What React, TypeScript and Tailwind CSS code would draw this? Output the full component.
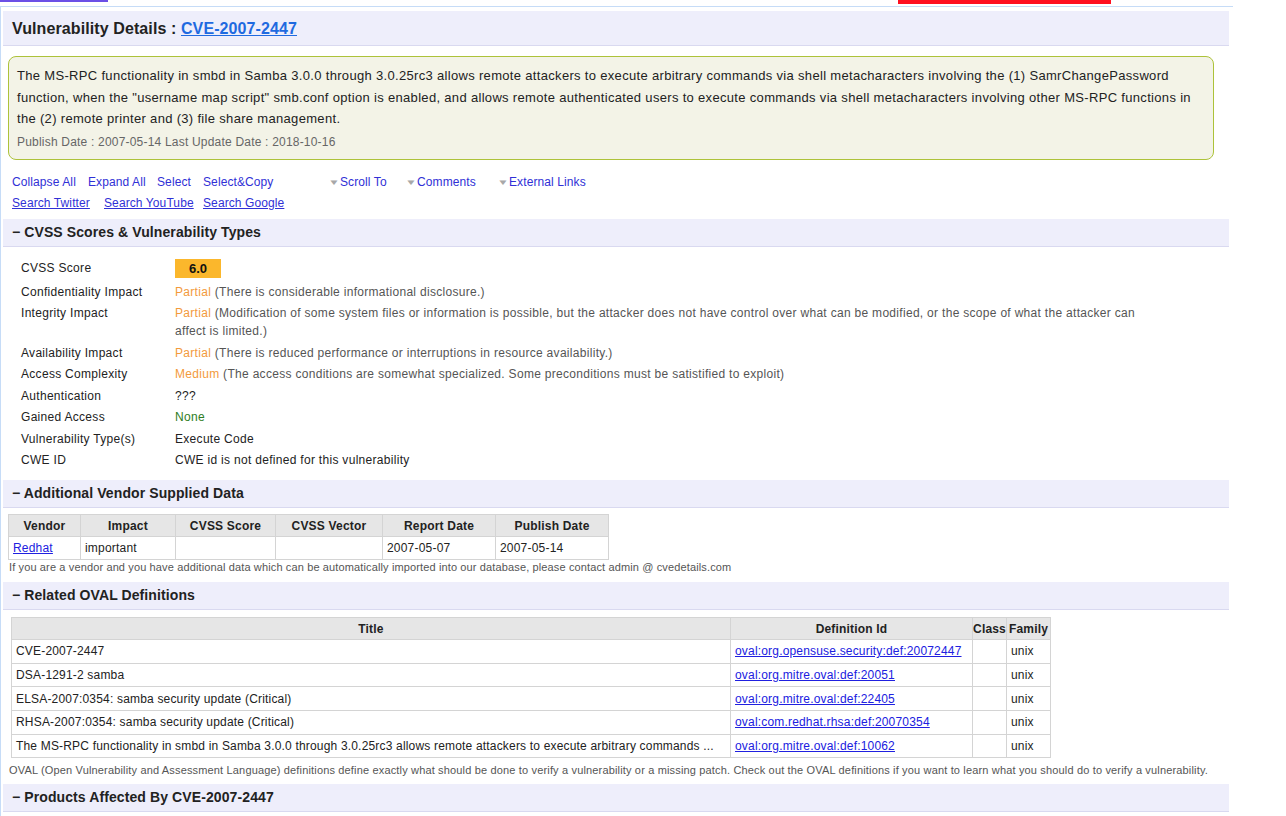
import React from "react";

const F = "font-['Liberation_Sans',Arial,sans-serif]";

function SectionHeader({ title }: { title: string }) {
  return (
    <div className="h-[28px] bg-[#eeeefb] border-b border-[#d9d9f0] flex items-center pl-[9px]">
      <span className="text-[14px] font-bold text-[#222] tracking-[0.1px]">− {title}</span>
    </div>
  );
}

const O = "text-[#f39a3c]";

const cvssRows: { label: string; value: React.ReactNode }[] = [
  {
    label: "Confidentiality Impact",
    value: (
      <>
        <span className={O}>Partial</span> (There is considerable informational disclosure.)
      </>
    ),
  },
  {
    label: "Integrity Impact",
    value: (
      <>
        <span className="block whitespace-nowrap">
          <span className={O}>Partial</span> (Modification of some system files or information is possible, but the attacker does not have control over what can be modified, or the scope of what the attacker can
        </span>
        <span className="block">affect is limited.)</span>
      </>
    ),
  },
  {
    label: "Availability Impact",
    value: (
      <>
        <span className={O}>Partial</span> (There is reduced performance or interruptions in resource availability.)
      </>
    ),
  },
  {
    label: "Access Complexity",
    value: (
      <>
        <span className={O}>Medium</span> (The access conditions are somewhat specialized. Some preconditions must be satistified to exploit)
      </>
    ),
  },
  { label: "Authentication", value: <span className="text-[#222]">???</span> },
  { label: "Gained Access", value: <span className="text-[#2e7d1e]">None</span> },
  { label: "Vulnerability Type(s)", value: <span className="text-[#222]">Execute Code</span> },
  { label: "CWE ID", value: <span className="text-[#222]">CWE id is not defined for this vulnerability</span> },
];

const ovalRows = [
  ["CVE-2007-2447", "oval:org.opensuse.security:def:20072447"],
  ["DSA-1291-2 samba", "oval:org.mitre.oval:def:20051"],
  ["ELSA-2007:0354: samba security update (Critical)", "oval:org.mitre.oval:def:22405"],
  ["RHSA-2007:0354: samba security update (Critical)", "oval:com.redhat.rhsa:def:20070354"],
  [
    "The MS-RPC functionality in smbd in Samba 3.0.0 through 3.0.25rc3 allows remote attackers to execute arbitrary commands ...",
    "oval:org.mitre.oval:def:10062",
  ],
];

const B = "border border-[#d4d4d4]";

export default function App() {
  return (
    <div className={`${F} bg-white w-[1286px] h-[816px] overflow-hidden text-[#333]`}>
      {/* top strip */}
      <div className="h-[6px] flex">
        <div className="w-[108px] h-[2px] bg-[#6b4fe6]" />
        <div className="ml-[790px] w-[213px] h-[4px] bg-[#ff1020]" />
      </div>
      <div className="w-[1233px] border-t border-l border-[#c6dcf7] pl-[2px] pr-[4px] pt-[4px] min-h-[810px]">
        {/* title bar */}
        <div className="h-[35px] bg-[#eeeefb] border-b border-[#d9d9f0] flex items-center pl-[9px] pt-[1px]">
          <h1 className="text-[16px] font-bold text-[#222] tracking-[0.1px]">
            Vulnerability Details :{" "}
            <a href="#" className="text-[#1f6ae0] underline">
              CVE-2007-2447
            </a>
          </h1>
        </div>

        {/* description */}
        <div className="mt-[10px] ml-[5px] w-[1206px] h-[104px] rounded-[8px] border border-[#adc23a] bg-[#f3f3e7] pl-[8px] pt-[8px]">
          <div className="text-[13px] leading-[21.5px] text-[#222] tracking-[0.32px]">
            <div className="whitespace-nowrap">
              The MS-RPC functionality in smbd in Samba 3.0.0 through 3.0.25rc3 allows remote attackers to execute arbitrary commands via shell metacharacters involving the (1) SamrChangePassword
            </div>
            <div className="whitespace-nowrap">
              function, when the "username map script" smb.conf option is enabled, and allows remote authenticated users to execute commands via shell metacharacters involving other MS-RPC functions in
            </div>
            <div className="whitespace-nowrap">the (2) remote printer and (3) file share management.</div>
          </div>
          <div className="text-[12px] text-[#666] leading-[15px] mt-[5px] tracking-[0.2px]">
            Publish Date : 2007-05-14 Last Update Date : 2018-10-16
          </div>
        </div>

        {/* links */}
        <div className="mt-[12px] pl-[9px] text-[12px] leading-[21px] text-[#3030d6] tracking-[0.1px]">
          <div className="flex">
            <span className="w-[76px]">Collapse All</span>
            <span className="w-[69px]">Expand All</span>
            <span className="w-[46px]">Select</span>
            <span className="w-[125px]">Select&amp;Copy</span>
            <span className="w-[77px] flex items-center">
              <span className="text-[#a8a8a8] text-[8px] w-[12px] scale-x-150 origin-left">▼</span>Scroll To
            </span>
            <span className="w-[92px] flex items-center">
              <span className="text-[#a8a8a8] text-[8px] w-[12px] scale-x-150 origin-left">▼</span>Comments
            </span>
            <span className="flex items-center">
              <span className="text-[#a8a8a8] text-[8px] w-[12px] scale-x-150 origin-left">▼</span>External Links
            </span>
          </div>
          <div className="flex">
            <a href="#" className="w-[92px] underline">Search Twitter</a>
            <a href="#" className="w-[99px] underline">Search YouTube</a>
            <a href="#" className="underline">Search Google</a>
          </div>
        </div>

        {/* CVSS */}
        <div className="mt-[5px]">
          <SectionHeader title="CVSS Scores & Vulnerability Types" />
        </div>
        <div className="mt-[12px] pl-[18px] text-[12px] leading-[18px] tracking-[0.3px]">
          <div className="flex h-[22px] items-start">
            <div className="w-[154px] text-[#222] leading-[18px]">CVSS Score</div>
            <div className="w-[46px] h-[19px] bg-[#fbb72c] flex items-center justify-center font-bold text-[13px] text-[#111] tracking-normal">
              6.0
            </div>
          </div>
          {cvssRows.map((r) => (
            <div key={r.label} className="flex py-[1.75px]">
              <div className="w-[154px] shrink-0 text-[#222]">{r.label}</div>
              <div className="text-[#555]">{r.value}</div>
            </div>
          ))}
        </div>

        {/* Vendor */}
        <div className="mt-[9px]">
          <SectionHeader title="Additional Vendor Supplied Data" />
        </div>
        <table className="mt-[6px] ml-[5px] border-collapse table-fixed w-[600px] text-[12px] text-[#222] tracking-[0.2px]">
          <thead>
            <tr className="bg-[#e6e6e6] h-[22px]">
              {[
                ["Vendor", "w-[72px]"],
                ["Impact", "w-[95px]"],
                ["CVSS Score", "w-[100px]"],
                ["CVSS Vector", "w-[107px]"],
                ["Report Date", "w-[113px]"],
                ["Publish Date", "w-[113px]"],
              ].map(([h, w]) => (
                <th key={h} className={`${w} ${B} font-bold text-center`}>
                  {h}
                </th>
              ))}
            </tr>
          </thead>
          <tbody>
            <tr className="h-[23px]">
              <td className={`${B} px-[4px]`}>
                <a href="#" className="text-[#2020e0] underline">Redhat</a>
              </td>
              <td className={`${B} px-[4px]`}>important</td>
              <td className={`${B} px-[4px]`}></td>
              <td className={`${B} px-[4px]`}></td>
              <td className={`${B} px-[4px]`}>2007-05-07</td>
              <td className={`${B} px-[4px]`}>2007-05-14</td>
            </tr>
          </tbody>
        </table>
        <div className="pl-[6px] text-[11px] leading-[18px] text-[#555] -mt-[2px] tracking-[0.13px]">
          If you are a vendor and you have additional data which can be automatically imported into our database, please contact admin @ cvedetails.com
        </div>

        {/* OVAL */}
        <div className="mt-[6px]">
          <SectionHeader title="Related OVAL Definitions" />
        </div>
        <table className="mt-[7px] ml-[8px] border-collapse table-fixed w-[1039px] text-[12px] text-[#222] tracking-[0.18px]">
          <thead>
            <tr className="bg-[#e6e6e6] h-[22px]">
              <th className={`w-[719px] ${B} font-bold text-center`}>Title</th>
              <th className={`w-[242px] ${B} font-bold text-center`}>Definition Id</th>
              <th className={`w-[34px] ${B} font-bold text-center`}>Class</th>
              <th className={`w-[44px] ${B} font-bold text-center`}>Family</th>
            </tr>
          </thead>
          <tbody>
            {ovalRows.map(([t, d]) => (
              <tr key={d} className="h-[23.7px]">
                <td className={`${B} px-[4px] whitespace-nowrap overflow-hidden`}>{t}</td>
                <td className={`${B} px-[4px]`}>
                  <a href="#" className="text-[#2020e0] underline">{d}</a>
                </td>
                <td className={`${B} px-[4px]`}></td>
                <td className={`${B} px-[4px]`}>unix</td>
              </tr>
            ))}
          </tbody>
        </table>
        <div className="pl-[6px] text-[11px] leading-[18px] text-[#555] mt-[3px] tracking-[0.16px] whitespace-nowrap">
          OVAL (Open Vulnerability and Assessment Language) definitions define exactly what should be done to verify a vulnerability or a missing patch. Check out the OVAL definitions if you want to learn what you should do to verify a vulnerability.
        </div>

        <div className="mt-[5px]">
          <SectionHeader title="Products Affected By CVE-2007-2447" />
        </div>
      </div>
    </div>
  );
}
